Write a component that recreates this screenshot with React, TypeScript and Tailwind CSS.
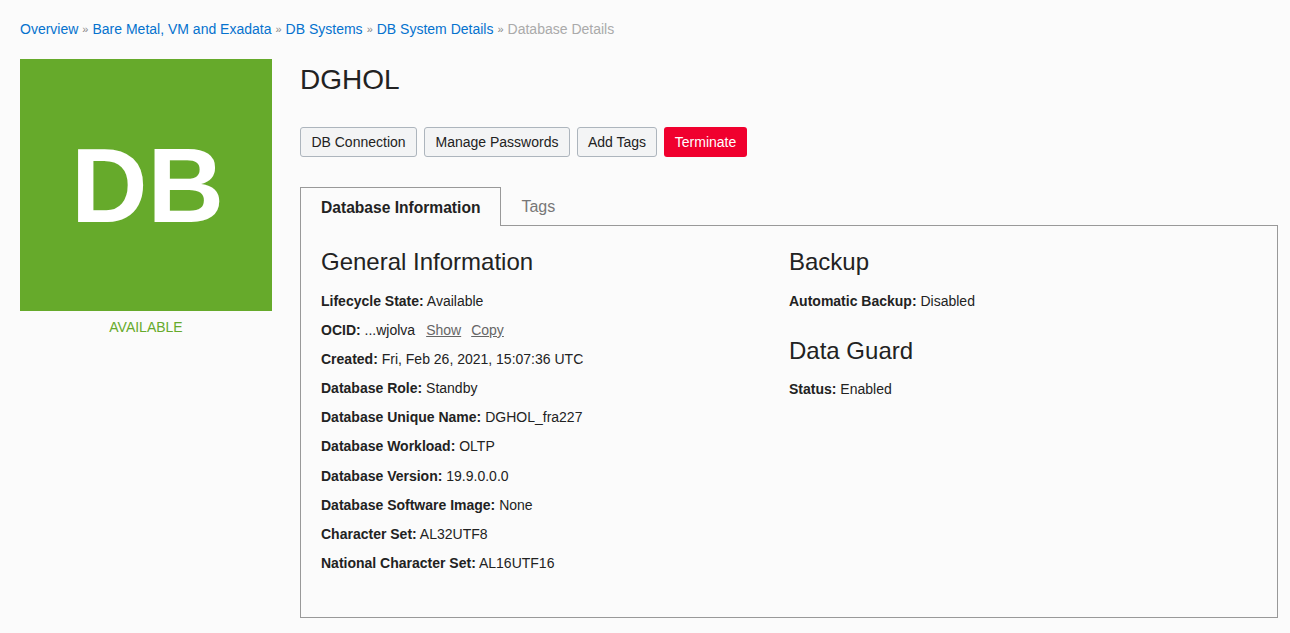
import React from 'react';

const generalRows: { label: string; value: string }[] = [
  { label: 'Lifecycle State:', value: 'Available' },
  { label: 'OCID:', value: '...wjolva' },
  { label: 'Created:', value: 'Fri, Feb 26, 2021, 15:07:36 UTC' },
  { label: 'Database Role:', value: 'Standby' },
  { label: 'Database Unique Name:', value: 'DGHOL_fra227' },
  { label: 'Database Workload:', value: 'OLTP' },
  { label: 'Database Version:', value: '19.9.0.0.0' },
  { label: 'Database Software Image:', value: 'None' },
  { label: 'Character Set:', value: 'AL32UTF8' },
  { label: 'National Character Set:', value: 'AL16UTF16' },
];

const crumbs = ['Overview', 'Bare Metal, VM and Exadata', 'DB Systems', 'DB System Details'];

const Row: React.FC<{ label: string; value: string; children?: React.ReactNode }> = ({ label, value, children }) => (
  <div className="h-[29.2px] text-[14px] leading-[20px] text-[#222]">
    <span className="font-bold">{label}</span> {value}
    {children}
  </div>
);

export default function App() {
  return (
    <div className="h-[633px] overflow-hidden bg-[#fbfbfb] pl-5 pr-3 pt-[18.5px] font-['Liberation_Sans',Arial,sans-serif] text-[#222]">
      {/* Breadcrumbs */}
      <div className="flex h-5 items-center text-[14px] leading-5">
        {crumbs.map(c => (
          <React.Fragment key={c}>
            <span className="text-[#0572ce]">{c}</span>
            <span className="mx-[4px] text-[11px] text-[#888]">»</span>
          </React.Fragment>
        ))}
        <span className="text-[#aaa]">Database Details</span>
      </div>

      <div className="mt-[20.5px] flex">
        {/* Left tile */}
        <div className="w-[252px] shrink-0">
          <div className="flex h-[252px] w-[252px] items-center justify-center bg-[#66aa2b] pl-[3px] text-[106px] font-bold leading-none text-white">
            DB
          </div>
          <div className="mt-[6px] text-center text-[14px] leading-5 text-[#66aa2b]">AVAILABLE</div>
        </div>

        {/* Main */}
        <div className="ml-7 flex-1">
          <h1 className="text-[28px] leading-[42px] text-[#222]">DGHOL</h1>
          <div className="mt-[26px] flex gap-[7px]">
            <button className="h-[30px] w-[117px] rounded-[3px] border border-[#adb5bd] bg-[#f3f4f5] text-[14px] text-[#222]">DB Connection</button>
            <button className="h-[30px] w-[146px] rounded-[3px] border border-[#adb5bd] bg-[#f3f4f5] text-[14px] text-[#222]">Manage Passwords</button>
            <button className="h-[30px] w-[80px] rounded-[3px] border border-[#adb5bd] bg-[#f3f4f5] text-[14px] text-[#222]">Add Tags</button>
            <button className="h-[30px] w-[83px] rounded-[3px] bg-[#f0002e] text-[14px] text-white">Terminate</button>
          </div>

          {/* Tabs */}
          <div className="mt-[30px] flex h-[39px] text-[16px]">
            <div className="z-10 flex h-[39px] items-center border border-b-0 border-[#999] bg-[#fbfbfb] px-5 pt-px text-[15.6px] font-bold text-[#222]">
              Database Information
            </div>
            <div className="flex items-center px-5 text-[#777]">Tags</div>
          </div>

          <div className="-mt-px flex h-[393px] border border-[#999] px-5 pt-5">
            <div className="w-[468px]">
              <h2 className="mb-[12.5px] text-[24px] leading-8">General Information</h2>
              {generalRows.map(r => (
                <Row key={r.label} label={r.label} value={r.value}>
                  {r.label === 'OCID:' && (
                    <span className="text-[#666]">
                      <span className="ml-[11px] underline">Show</span>
                      <span className="ml-[10px] underline">Copy</span>
                    </span>
                  )}
                </Row>
              ))}
            </div>
            <div className="flex-1">
              <h2 className="mb-[12.5px] text-[24px] leading-8">Backup</h2>
              <Row label="Automatic Backup:" value="Disabled" />
              <h2 className="mb-[12.5px] mt-[15px] text-[24px] leading-8">Data Guard</h2>
              <Row label="Status:" value="Enabled" />
            </div>
          </div>
        </div>
      </div>
    </div>
  );
}
